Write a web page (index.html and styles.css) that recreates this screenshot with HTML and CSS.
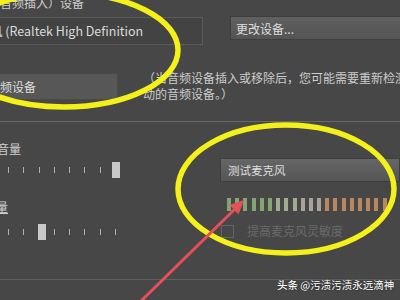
FILE: index.html
```html
<!DOCTYPE html>
<html lang="zh-CN">
<head>
    <meta charset="UTF-8">
    <meta name="viewport" content="width=device-width, initial-scale=1.0">
    <title>录制设备属性</title>
    <link rel="stylesheet" href="styles.css">
</head>
<body>
    <div class="dialog">
        <section class="device">
            <div class="caption">（音频插入）设备</div>
            <div class="device-row">
                <div class="field">麦克风 (Realtek High Definition</div>
                <button class="btn btn-change">更改设备...</button>
            </div>
            <div class="detect-row">
                <button class="btn btn-detect">检测音频设备</button>
                <p class="note">（当音频设备插入或移除后，您可能需要重新检测<br>动的音频设备。）</p>
            </div>
        </section>

        <section class="mic">
            <div class="levels">
                <div class="label">音量</div>
                <div class="slider" id="volume"></div>
                <div class="label label-boost">量</div>
                <div class="slider" id="boost"></div>
            </div>
            <div class="test">
                <button class="btn btn-test">测试麦克风</button>
                <div class="meter" id="meter"></div>
                <label class="check">
                    <span class="box"></span>
                    <span>提高麦克风灵敏度</span>
                </label>
            </div>
        </section>

        <svg class="marks" width="400" height="300" viewBox="0 0 400 300">
            <ellipse cx="64" cy="50" rx="114" ry="57" fill="none" stroke="#f4f01a" stroke-width="5.5"/>
            <ellipse cx="286" cy="189" rx="108" ry="64" fill="none" stroke="#f4f01a" stroke-width="5.5"/>
            <line x1="140" y1="302" x2="236" y2="208" stroke="#e4505a" stroke-width="3" stroke-linecap="round"/>
            <polygon points="244,200 238.5,214.5 229.5,205" fill="#e4505a"/>
        </svg>

        <div class="watermark"><b>头条</b> @污渍污渍永远滴神</div>
    </div>

    <script>
        // 滑块刻度: 位置 = 滑块所在的刻度序号
        function buildSlider(id, thumbAt, ticks) {
            const el = document.getElementById(id);
            let html = '';
            for (let i = 0; i < ticks; i++) {
                if (i === thumbAt) html += '<span class="thumb"></span>';
                html += '<span class="tick"></span>';
            }
            if (thumbAt >= ticks) html += '<span class="thumb"></span>';
            el.innerHTML = html;
            el.classList.add(thumbAt >= ticks ? 'end' : 'mid');
        }
        buildSlider('volume', 7, 7);
        buildSlider('boost', 2, 7);

        const levels = 'gggggg' + 'ppp' + 'nnn' + 'oooooooo';
        document.getElementById('meter').innerHTML = levels.split('')
            .map(c => `<span class="seg ${c}"></span>`).join('');
    </script>
</body>
</html>
```

FILE: styles.css
```css
body {
    margin: 0;
    background-color: #474747;
    font-family: "Noto Sans CJK SC", "Noto Sans", sans-serif;
    color: #d6d6d6;
}

.dialog {
    position: relative;
    width: 400px;
    height: 300px;
    overflow: hidden;
}

.device {
    height: 125px;
    border-bottom: 1px solid #686868;
}

.caption {
    font-size: 12px;
    line-height: 14px;
    margin-top: -4px;
    margin-left: -12px;
    white-space: nowrap;
    color: #cfcfcf;
}

.device-row {
    display: flex;
    align-items: flex-start;
    margin-top: 6px;
    gap: 27px;
}

.field {
    flex: none;
    box-sizing: border-box;
    width: 243px;
    height: 28px;
    margin-top: 1px;
    margin-left: -40px;
    padding-left: 4px;
    background-color: #434343;
    border: 1px solid #5a5a5a;
    font-size: 12.5px;
    line-height: 26px;
    white-space: nowrap;
    overflow: hidden;
    color: #dadada;
}

.btn {
    font-family: inherit;
    color: #dedede;
    text-align: left;
    border: 1px solid #3e3e3e;
    background: linear-gradient(#606060, #545454);
    padding: 0 0 0 5px;
    white-space: nowrap;
}

.btn-change {
    flex: 1;
    height: 24px;
    font-size: 12px;
    margin-right: -10px;
}

.detect-row {
    display: flex;
    align-items: flex-start;
    margin-top: 27px;
    gap: 25px;
}

.btn-detect {
    flex: none;
    width: 178px;
    height: 27px;
    margin-top: 1px;
    margin-left: -60px;
    padding-left: 23px;
    font-size: 12px;
    background: #575757;
    border-color: #4a4a4a;
}

.note {
    margin: -2px 0 0;
    font-size: 12px;
    line-height: 16px;
    white-space: nowrap;
    color: #cccccc;
}

.mic {
    display: flex;
    height: 157px;
    border-bottom: 1px solid #5e5e5e;
}

.levels {
    width: 230px;
}

.label {
    margin-top: 20px;
    margin-left: -3px;
    font-size: 12px;
    line-height: 14px;
    color: #cfcfcf;
}

.label-boost {
    margin-top: 22px;
    margin-left: -4px;
    text-decoration: underline;
}

.slider {
    display: flex;
    align-items: center;
    height: 16px;
    margin-top: 6px;
    padding-left: 8px;
    gap: 14.3px;
}

#boost {
    margin-top: 10px;
}

.tick {
    width: 1px;
    height: 6px;
    background-color: #b0b0b0;
}

.thumb {
    width: 8px;
    height: 16px;
    background-color: #c9c9c9;
}

.end .thumb {
    margin-left: -3px;
}

.mid .thumb {
    margin-left: -1px;
    margin-right: -6px;
}

.test {
    flex: 1;
}

.btn-test {
    display: block;
    box-sizing: border-box;
    width: 180px;
    height: 24px;
    margin-top: 36px;
    padding-left: 7px;
    font-size: 11.5px;
    background: linear-gradient(#666, #555);
}

.meter {
    display: flex;
    gap: 4.2px;
    height: 13px;
    margin-top: 16px;
    padding-left: 7px;
}

.seg {
    width: 4px;
    flex: none;
}

.seg.g { background-color: #86a470; }
.seg.p { background-color: #a0ac92; }
.seg.n { background-color: #a8a29a; }
.seg.o { background-color: #b8875f; }

.check {
    display: flex;
    align-items: center;
    gap: 13px;
    margin-top: 13px;
    padding-left: 1px;
    font-size: 12px;
    line-height: 14px;
    color: #6a6a6a;
}

.box {
    width: 11px;
    height: 11px;
    border: 1px solid #646464;
}

.marks {
    position: absolute;
    top: 0;
    left: 0;
    pointer-events: none;
}

.watermark {
    position: absolute;
    left: 277px;
    top: 277px;
    font-size: 10.5px;
    line-height: 16px;
    color: #fff;
    white-space: nowrap;
    text-shadow: 0 0 2px rgba(0, 0, 0, 0.6);
}

.watermark b {
    font-weight: 500;
}
```
